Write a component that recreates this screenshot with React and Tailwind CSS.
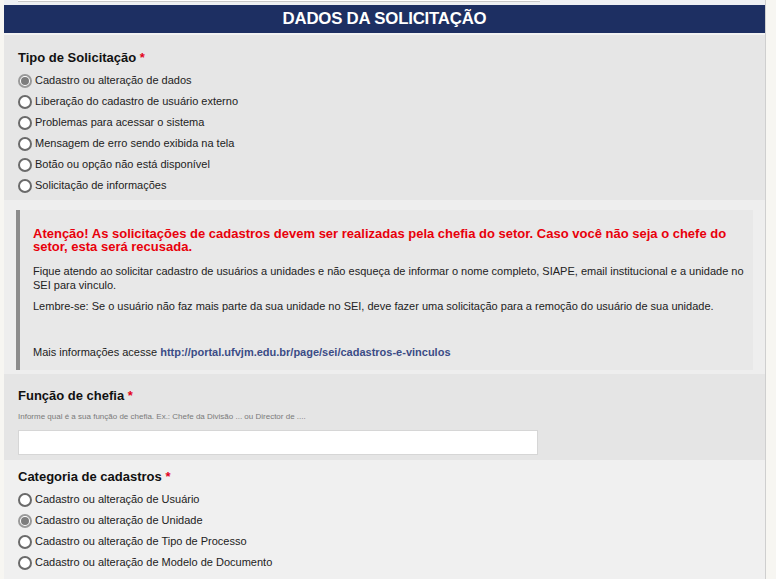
import React, { useState } from 'react';

const tiposSolicitacao = [
  'Cadastro ou alteração de dados',
  'Liberação do cadastro de usuário externo',
  'Problemas para acessar o sistema',
  'Mensagem de erro sendo exibida na tela',
  'Botão ou opção não está disponível',
  'Solicitação de informações',
];

const categorias = [
  'Cadastro ou alteração de Usuário',
  'Cadastro ou alteração de Unidade',
  'Cadastro ou alteração de Tipo de Processo',
  'Cadastro ou alteração de Modelo de Documento',
];

const font = { fontFamily: '"Liberation Sans", Arial, sans-serif' };

const Radio = ({ label, checked, onSelect }) => (
  <label className="flex items-center h-[21px] cursor-pointer text-[11px] text-[#222]" onClick={onSelect}>
    {checked ? (
      <span className="w-[14px] h-[14px] rounded-full border-2 border-[#9a9a9a] bg-white flex items-center justify-center">
        <span className="w-[8px] h-[8px] rounded-full bg-[#7d7d7d]" />
      </span>
    ) : (
      <span className="w-[14px] h-[14px] rounded-full border-2 border-[#6a6a6a] bg-white" />
    )}
    <span className="ml-[3px]">{label}</span>
  </label>
);

const Heading = ({ children }) => (
  <h3 className="text-[13px] font-bold text-[#111] leading-[16px]">
    {children} <span className="text-[#e3001b]">*</span>
  </h3>
);

export default function App() {
  const [tipo, setTipo] = useState(0);
  const [categoria, setCategoria] = useState(1);
  const [funcao, setFuncao] = useState('');

  return (
    <div className="min-h-screen bg-[#f7f6f2] pl-[4px]" style={font}>
      <div className="w-[762px] border-r border-[#cfcfcf]">
        {/* bottom of the previous field */}
        <div className="h-[5px] bg-[#eef0f3] pl-[14px]">
          <div className="h-[2px] w-[522px] bg-white border-b border-[#c9c9c9]" />
        </div>

        <div className="h-[28px] bg-[#1d2f62] flex items-center justify-center">
          <h2 className="text-white font-bold text-[16.8px] tracking-[-0.2px]">DADOS DA SOLICITAÇÃO</h2>
        </div>
        <div className="h-[2px] bg-[#f2f2f2]" />

        {/* Tipo de solicitação */}
        <section className="bg-[#e6e6e6] px-[14px] pt-[15px] pb-[4px]">
          <Heading>Tipo de Solicitação</Heading>
          <div className="mt-[4px]">
            {tiposSolicitacao.map((t, i) => (
              <Radio key={t} label={t} checked={tipo === i} onSelect={() => setTipo(i)} />
            ))}
          </div>
        </section>

        {/* Aviso */}
        <section className="bg-[#eeeeee] pl-[12px] pr-[12px] pt-[10px] pb-[4px]">
          <div className="border-l-[4px] border-[#8c8c8c] bg-[#e8e8e8] pl-[13px] pr-[8px] pt-[17px] pb-[12px] h-[160px]">
            <p className="text-[#e8000b] font-bold text-[13px] leading-[13px]">
              Atenção! As solicitações de cadastros devem ser realizadas pela chefia do setor. Caso você não seja o chefe do setor, esta será recusada.
            </p>
            <p className="mt-[11px] text-[11px] leading-[14px] text-[#222]">
              Fique atendo ao solicitar cadastro de usuários a unidades e não esqueça de informar o nome completo, SIAPE, email institucional e a unidade no SEI para vinculo.
            </p>
            <p className="mt-[7px] text-[11px] leading-[14px] text-[#222]">
              Lembre-se: Se o usuário não faz mais parte da sua unidade no SEI, deve fazer uma solicitação para a remoção do usuário de sua unidade.
            </p>
            <p className="mt-[32px] text-[11px] leading-[14px] text-[#222]">
              Mais informações acesse{' '}
              <a href="#" className="font-bold text-[#3b4c86]">http://portal.ufvjm.edu.br/page/sei/cadastros-e-vinculos</a>
            </p>
          </div>
        </section>

        {/* Função de chefia */}
        <section className="bg-[#e5e5e5] px-[14px] pt-[14px] pb-[5px]">
          <Heading>Função de chefia</Heading>
          <p className="mt-[8px] text-[8px] text-[#7a7a7a] leading-[10px]">
            Informe qual é a sua função de chefia. Ex.: Chefe da Divisão ... ou Director de ....
          </p>
          <input
            value={funcao}
            onChange={(e) => setFuncao(e.target.value)}
            className="mt-[8px] block w-[520px] h-[25px] bg-white border border-[#d6d6d6] outline-none px-2 text-[12px]"
          />
        </section>

        {/* Categoria de cadastros */}
        <section className="bg-[#f0f0f0] px-[14px] pt-[9px] pb-[20px]">
          <Heading>Categoria de cadastros</Heading>
          <div className="mt-[4px]">
            {categorias.map((c, i) => (
              <Radio key={c} label={c} checked={categoria === i} onSelect={() => setCategoria(i)} />
            ))}
          </div>
        </section>
      </div>
    </div>
  );
}
